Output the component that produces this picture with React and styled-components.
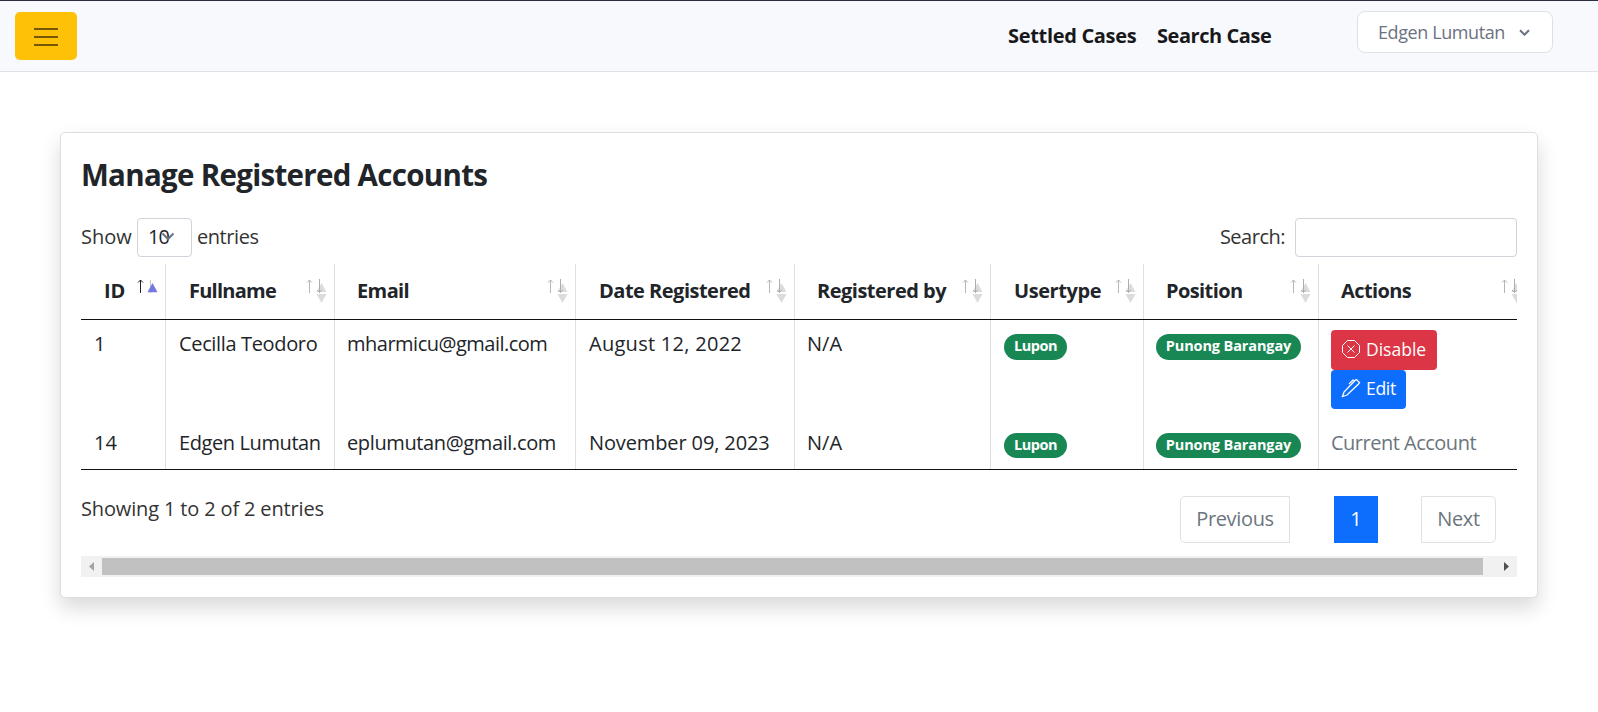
import React from 'react';
import styled, { createGlobalStyle } from 'styled-components';

const Global = createGlobalStyle`
  *, *::before, *::after { box-sizing: border-box; }
  body {
    margin: 0;
    min-height: 100vh;
    background: #fff;
    color: #212529;
    font: 400 20px/28px "Open Sans", sans-serif;
  }
`;

const Text = styled.span`
  display: inline-block;
  letter-spacing: ${(p) => p.$track || 0}px;
  white-space: nowrap;
`;

const TopBar = styled.header`
  display: flex;
  align-items: flex-start;
  height: 72px;
  padding: 0 45px 0 15px;
  background: #f8f9fc;
  border-top: 1px solid #2b2d42;
  border-bottom: 1px solid #dee2e6;
`;

const MenuButton = styled.button`
  display: grid;
  place-items: center;
  width: 62px;
  height: 48px;
  margin-top: 11px;
  padding: 2px 0 0;
  border: 0;
  border-radius: 5px;
  background: #ffc107;
`;

const NavLinks = styled.nav`
  display: flex;
  gap: 20px;
  margin: 21px 85px 0 auto;
  font-weight: 700;
`;

const NavLink = styled.a`
  color: #18181b;
  width: ${(p) => p.$w}px;
`;

const UserMenu = styled.button`
  display: flex;
  align-items: center;
  justify-content: space-between;
  width: 196px;
  height: 42px;
  margin-top: 10px;
  padding: 0 22px 1px 20px;
  border: 1px solid #dee2e6;
  border-radius: 8px;
  background: #fff;
  color: #6b7280;
  font: 400 18px/26px "Open Sans", sans-serif;
`;

const Card = styled.main`
  width: 1478px;
  height: 466px;
  margin: 60px 0 0 60px;
  padding: 24px 20px 0;
  border: 1px solid #dfdfdf;
  border-radius: 5px;
  background: #fff;
  box-shadow: 0 10px 20px rgba(0, 0, 0, 0.15);
`;

const Title = styled.h4`
  margin: 0;
  font-size: 29.5px;
  font-weight: 700;
  line-height: 36px;
`;

const Controls = styled.div`
  display: flex;
  justify-content: space-between;
  margin-top: 25px;
  height: 39px;
  color: #333;
  line-height: 26px;
`;

const Field = styled.label`
  display: flex;
  align-items: center;
  gap: ${(p) => p.$gap}px;

  > span { padding-bottom: 2px; }
`;

const LengthSelect = styled.div`
  display: flex;
  align-items: center;
  width: 55px;
  height: 39px;
  padding: 0 0 2px 10px;
  border: 1px solid #ced4da;
  border-radius: 4px;
  color: #212529;
`;

const SelectArrow = styled.svg`
  margin-left: -8px;
`;

const SearchInput = styled.input`
  width: 222px;
  height: 39px;
  border: 1px solid #ced4da;
  border-radius: 4px;
  background: #fff;
`;

const Table = styled.div`
  width: 1436px;
  margin-top: 7px;
  overflow: hidden;
  border-bottom: 1px solid #111;
`;

const Row = styled.div`
  display: grid;
  grid-template-columns: 85px 169px 241px 219px 196px 153px 175px 211px;
  width: 1449px;
`;

const HeadRow = styled(Row)`
  height: 56px;
  border-bottom: 1px solid #111;
  font-weight: 700;
`;

const BodyRow = styled(Row)`
  height: ${(p) => p.$h}px;
`;

const HeadCell = styled.div`
  position: relative;
  padding: 13px 0 0 ${(p) => p.$pad}px;
  border-right: 1px solid #dee2e6;
`;

const Cell = styled.div`
  display: flex;
  flex-direction: column;
  align-items: flex-start;
  padding: 10px 0 0 ${(p) => p.$pad || 12}px;
  border-right: 1px solid #dee2e6;
  color: ${(p) => (p.$muted ? '#6c757d' : 'inherit')};
  &:last-child { border-right: 0; }
`;

const SortIcon = styled.svg`
  position: absolute;
  right: 8px;
  top: 14px;
  overflow: visible;
`;

const Badge = styled.span`
  display: flex;
  justify-content: center;
  width: ${(p) => p.$w}px;
  height: ${(p) => p.$h || 26}px;
  margin-top: 4px;
  border-radius: 13px;
  background: #198754;
  color: #fff;
  font-size: 14.5px;
  font-weight: 700;
  line-height: 24px;
`;

const ActionButton = styled.button`
  display: flex;
  align-items: center;
  gap: 5px;
  width: ${(p) => p.$w}px;
  height: ${(p) => p.$h}px;
  padding: 0 0 3px 10px;
  border: 0;
  border-radius: 4px;
  background: ${(p) => p.$bg};
  color: #fff;
  font: 400 17.5px/26px "Open Sans", sans-serif;
`;

const Footer = styled.div`
  display: flex;
  justify-content: space-between;
  height: 86px;
  padding: 25px 21px 0 0;
  color: #333;
`;

const Pager = styled.div`
  display: flex;
  gap: 43px;
  padding-top: 1px;
`;

const PageLink = styled.a`
  display: flex;
  justify-content: center;
  width: ${(p) => p.$w}px;
  height: 47px;
  margin-right: ${(p) => p.$gapAfter || 0}px;
  border: 1px solid ${(p) => (p.$on ? '#0d6efd' : '#dee2e6')};
  border-radius: ${(p) => p.$r || 0};
  background: ${(p) => (p.$on ? '#0d6efd' : '#fff')};
  color: ${(p) => (p.$on ? '#fff' : '#6c757d')};
  line-height: 43px;
`;

const Scrollbar = styled.div`
  display: flex;
  align-items: center;
  width: 1436px;
  height: 21px;
  padding: 0 8px;
  background: #f1f1f1;
`;

const Thumb = styled.div`
  flex: none;
  width: 1381px;
  height: 17px;
  margin: 0 20px 0 7px;
  background: #c1c1c1;
`;

const Sort = ({ active }) => (
  <SortIcon width="20" height="26" viewBox="0 0 20 26" fill="none">
    <path d="M3.5 15V2M1 4.5L3.5 2L6 4.5" stroke={active ? '#212529' : '#b5b5b7'} />
    {active ? (
      <path d="M13.5 2v13" stroke="#c4c4c6" />
    ) : (
      <path d="M15.5 5l5 9h-10zM15.5 25l5-9h-10z" fill="#dcdcdc" />
    )}
    {active ? (
      <path d="M15.5 5l5 9.3h-10z" fill="#7478dc" />
    ) : (
      <path d="M13.5 1v13.5M11 12l2.5 2.5L16 12" stroke="#adadaf" />
    )}
  </SortIcon>
);

const Triangle = ({ left }) => (
  <svg width="6" height="9" viewBox="0 0 6 9">
    <path d={left ? 'M5 0v9L0 4.5z' : 'M1 0v9l5-4.5z'} fill={left ? '#a3a3a3' : '#505050'} />
  </svg>
);

const columns = [
  ['ID', 0, 23], ['Fullname', -0.75, 23], ['Email', -0.6, 22], ['Date Registered', -0.5, 23],
  ['Registered by', -0.5, 22], ['Usertype', -0.42, 23], ['Position', -0.6, 22], ['Actions', -0.6, 22],
];

const rows = [
  { h: 99, badge: 26, cells: [['1', 0, 13], ['Cecilla Teodoro', -0.35, 13], ['mharmicu@gmail.com', -0.5, 12], ['August 12, 2022', 0.28, 13], ['N/A', 0, 12]] },
  { h: 50, badge: 25, cells: [['14', 0, 13], ['Edgen Lumutan', -0.4, 13], ['eplumutan@gmail.com', -0.37, 12], ['November 09, 2023', -0.12, 13], ['N/A', 0, 12]], current: true },
];

export default function App() {
  return (
    <>
      <Global />
      <TopBar>
        <MenuButton aria-label="Menu">
          <svg width="24" height="18" viewBox="0 0 24 18" stroke="#735703" strokeWidth="2">
            <path d="M0 1h24M0 9h24M0 17h24" />
          </svg>
        </MenuButton>
        <NavLinks>
          <NavLink $w={129}><Text $track={-0.32}>Settled Cases</Text></NavLink>
          <NavLink $w={115}><Text $track={-0.45}>Search Case</Text></NavLink>
        </NavLinks>
        <UserMenu>
          <Text $track={-0.4}>Edgen Lumutan</Text>
          <svg width="11" height="8" viewBox="0 0 11 8" fill="none" stroke="#6b7280" strokeWidth="2">
            <path d="M1 2.2l4.5 4.5L10 2.2" />
          </svg>
        </UserMenu>
      </TopBar>
      <Card>
        <Title><Text $track={-0.7}>Manage Registered Accounts</Text></Title>
        <Controls>
          <Field $gap={5}>
            <Text $track={0.03}>Show</Text>
            <LengthSelect>
              <Text $track={-0.8}>10</Text>
              <SelectArrow width="14" height="9" viewBox="0 0 14 9" fill="none" stroke="#6b7280" strokeWidth="2">
                <path d="M1.5 1.5L7 7l5.5-5.5" />
              </SelectArrow>
            </LengthSelect>
            <Text $track={-0.42}>entries</Text>
          </Field>
          <Field $gap={10}>
            <Text $track={-0.5}>Search:</Text>
            <SearchInput />
          </Field>
        </Controls>
        <Table>
          <HeadRow>
            {columns.map(([name, track, pad], i) => (
              <HeadCell key={name} $pad={pad}>
                <Text $track={track}>{name}</Text>
                <Sort active={i === 0} />
              </HeadCell>
            ))}
          </HeadRow>
          {rows.map((row) => (
            <BodyRow key={row.h} $h={row.h}>
              {row.cells.map(([value, track, pad], i) => (
                <Cell key={i} $pad={pad}><Text $track={track}>{value}</Text></Cell>
              ))}
              <Cell $pad={13}><Badge $w={63} $h={row.badge}><Text $track={-0.5}>Lupon</Text></Badge></Cell>
              <Cell $pad={12}><Badge $w={145} $h={row.badge}><Text $track={-0.12}>Punong Barangay</Text></Badge></Cell>
              {row.current ? (
                <Cell $muted><Text $track={-0.5}>Current Account</Text></Cell>
              ) : (
                <Cell>
                  <ActionButton $w={106} $h={40} $bg="#dc3545">
                    <svg width="20" height="20" viewBox="0 0 20 20" fill="none" stroke="#fff">
                      <path d="M6.5 1.5h7l5 5v7l-5 5h-7l-5-5v-7zM6.5 6.5l7 7M13.5 6.5l-7 7" />
                    </svg>
                    <Text>Disable</Text>
                  </ActionButton>
                  <ActionButton $w={75} $h={39} $bg="#0d6efd">
                    <svg width="20" height="20" viewBox="0 0 20 20" fill="none" stroke="#fff" strokeWidth="1.3">
                      <path d="M1.5 18.5L3 14 14 2.5l1.5-1 3 3-1 1.5L6 17zM8 6l4-4 1.5.5" />
                    </svg>
                    <Text $track={-0.3}>Edit</Text>
                  </ActionButton>
                </Cell>
              )}
            </BodyRow>
          ))}
        </Table>
        <Footer>
          <Text $track={-0.15}>Showing 1 to 2 of 2 entries</Text>
          <Pager>
            <PageLink $w={110} $gapAfter={1} $r="5px 0 0 5px"><Text $track={-0.35}>Previous</Text></PageLink>
            <PageLink $w={44} $on><Text>1</Text></PageLink>
            <PageLink $w={75} $r="0 5px 5px 0"><Text $track={-0.3}>Next</Text></PageLink>
          </Pager>
        </Footer>
        <Scrollbar>
          <Triangle left />
          <Thumb />
          <Triangle />
        </Scrollbar>
      </Card>
    </>
  );
}
